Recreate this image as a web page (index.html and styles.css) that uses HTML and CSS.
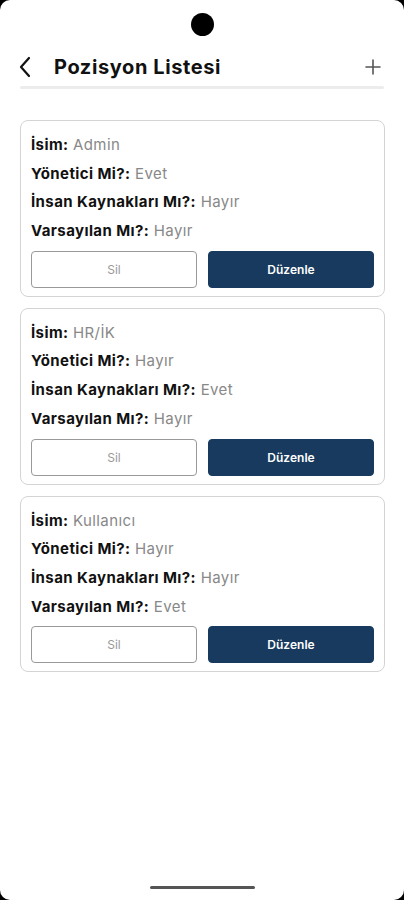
FILE: index.html
```html
<!DOCTYPE html>
<html lang="tr">
<head>
  <meta charset="UTF-8" />
  <title>Pozisyon Listesi</title>
  <link rel="stylesheet" href="styles.css">
</head>
<body>
  <div class="screen">
    <div class="status">
      <span class="camera"></span>
    </div>

    <div class="header">
      <button class="icon-btn back">
        <svg width="14" height="22" viewBox="0 0 14 22"><path d="M11 2 L3 11 L11 20" fill="none" stroke="#111" stroke-width="2.2" stroke-linecap="round" stroke-linejoin="round"/></svg>
      </button>
      <h1 class="title">Pozisyon Listesi</h1>
      <button class="icon-btn add">
        <svg width="16" height="16" viewBox="0 0 16 16"><path d="M8 1 V15 M1 8 H15" stroke="#555" stroke-width="1.6" stroke-linecap="round"/></svg>
      </button>
    </div>
    <div class="divider"></div>

    <div class="list">
      <div class="card">
        <p class="row"><b>İsim:</b> Admin</p>
        <p class="row"><b>Yönetici Mi?:</b> Evet</p>
        <p class="row"><b>İnsan Kaynakları Mı?:</b> Hayır</p>
        <p class="row"><b>Varsayılan Mı?:</b> Hayır</p>
        <div class="actions">
          <button class="btn delete">Sil</button>
          <button class="btn edit">Düzenle</button>
        </div>
      </div>

      <div class="card">
        <p class="row"><b>İsim:</b> HR/İK</p>
        <p class="row"><b>Yönetici Mi?:</b> Hayır</p>
        <p class="row"><b>İnsan Kaynakları Mı?:</b> Evet</p>
        <p class="row"><b>Varsayılan Mı?:</b> Hayır</p>
        <div class="actions">
          <button class="btn delete">Sil</button>
          <button class="btn edit">Düzenle</button>
        </div>
      </div>

      <div class="card">
        <p class="row"><b>İsim:</b> Kullanıcı</p>
        <p class="row"><b>Yönetici Mi?:</b> Hayır</p>
        <p class="row"><b>İnsan Kaynakları Mı?:</b> Hayır</p>
        <p class="row"><b>Varsayılan Mı?:</b> Evet</p>
        <div class="actions">
          <button class="btn delete">Sil</button>
          <button class="btn edit">Düzenle</button>
        </div>
      </div>
    </div>

    <div class="home-bar"></div>
  </div>
</body>
</html>
```

FILE: styles.css
```css
* {
  box-sizing: border-box;
}

html, body {
  margin: 0;
  padding: 0;
  height: 100%;
}

body {
  background: #000;
  font-family: "Inter", "Noto Sans", sans-serif;
}

.screen {
  position: relative;
  height: 900px;
  background: #fff;
  border-radius: 10px;
  display: flex;
  flex-direction: column;
}

.status {
  height: 48px;
  display: flex;
  justify-content: center;
  padding-top: 13px;
}

.camera {
  width: 23px;
  height: 23px;
  border-radius: 50%;
  background: #000;
}

/* Header */
.header {
  display: flex;
  align-items: center;
  height: 38px;
  padding: 0 20px 0 18px;
}

.icon-btn {
  background: none;
  border: none;
  padding: 0;
  display: flex;
  align-items: center;
  cursor: pointer;
}

.back {
  width: 36px;
}

.title {
  flex: 1;
  margin: 0;
  font-size: 20px;
  font-weight: 700;
  color: #111;
  letter-spacing: 0.6px;
}

.add {
  margin-right: 3px;
}

.divider {
  height: 3px;
  margin: 0 20px;
  background: #ececec;
  border-radius: 2px;
}

/* Cards */
.list {
  display: flex;
  flex-direction: column;
  gap: 11px;
  padding: 31px 19px 0 20px;
}

.card {
  border: 1px solid #d4d4d4;
  border-radius: 8px;
  padding: 14px 10px 8px 10px;
}

.row {
  margin: 0;
  height: 28.7px;
  font-size: 15px;
  line-height: 20px;
  letter-spacing: 0.4px;
  color: #888;
}

.row b {
  color: #111;
  font-weight: 700;
}

.actions {
  display: flex;
  gap: 11px;
  margin-top: 1px;
}

.btn {
  flex: 1;
  height: 37px;
  border-radius: 4px;
  font-family: inherit;
  font-size: 12px;
  cursor: pointer;
}

.delete {
  background: #fff;
  border: 1px solid #999;
  color: #999;
}

.edit {
  background: #173a5e;
  border: 1px solid #173a5e;
  color: #fff;
  font-weight: 600;
}

.home-bar {
  position: absolute;
  left: 150px;
  bottom: 11px;
  width: 105px;
  height: 3px;
  border-radius: 2px;
  background: #555;
}
```
